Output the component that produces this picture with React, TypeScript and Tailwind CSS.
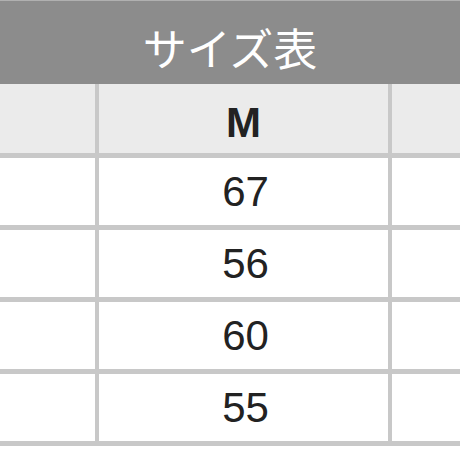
import React from "react";

const values = ["67", "56", "60", "55"];

export default function App() {
  return (
    <div className="w-[460px] h-[460px] overflow-hidden bg-white" style={{ fontFamily: '"Liberation Sans", Arial, sans-serif' }}>
      <div className="h-[84px] bg-[#8c8c8c] border-t border-[#b0b0b0] flex items-center justify-center pt-[8px]">
        <span
          className="text-white text-[44px] leading-none tracking-[0px]"
          style={{ fontFamily: '"Noto Sans CJK JP", "Noto Sans", sans-serif' }}
        >
          サイズ表
        </span>
      </div>
      <div className="grid grid-cols-[95px_289px_1fr] gap-x-[4px] gap-y-[5px] bg-[#c8c8c8] pb-[5px]">
        <div className="h-[69px] bg-[#ebebeb]" />
        <div className="h-[69px] bg-[#ebebeb] flex items-center justify-center pt-[8px]">
          <span className="text-[42px] font-bold leading-none text-[#222]">M</span>
        </div>
        <div className="h-[69px] bg-[#ebebeb]" />
        {values.map((v) => (
          <React.Fragment key={v}>
            <div className="h-[67px] bg-white" />
            <div className="h-[67px] bg-white flex items-center justify-center pl-[4px]">
              <span className="text-[42px] leading-none text-[#222]">{v}</span>
            </div>
            <div className="h-[67px] bg-white" />
          </React.Fragment>
        ))}
      </div>
    </div>
  );
}
